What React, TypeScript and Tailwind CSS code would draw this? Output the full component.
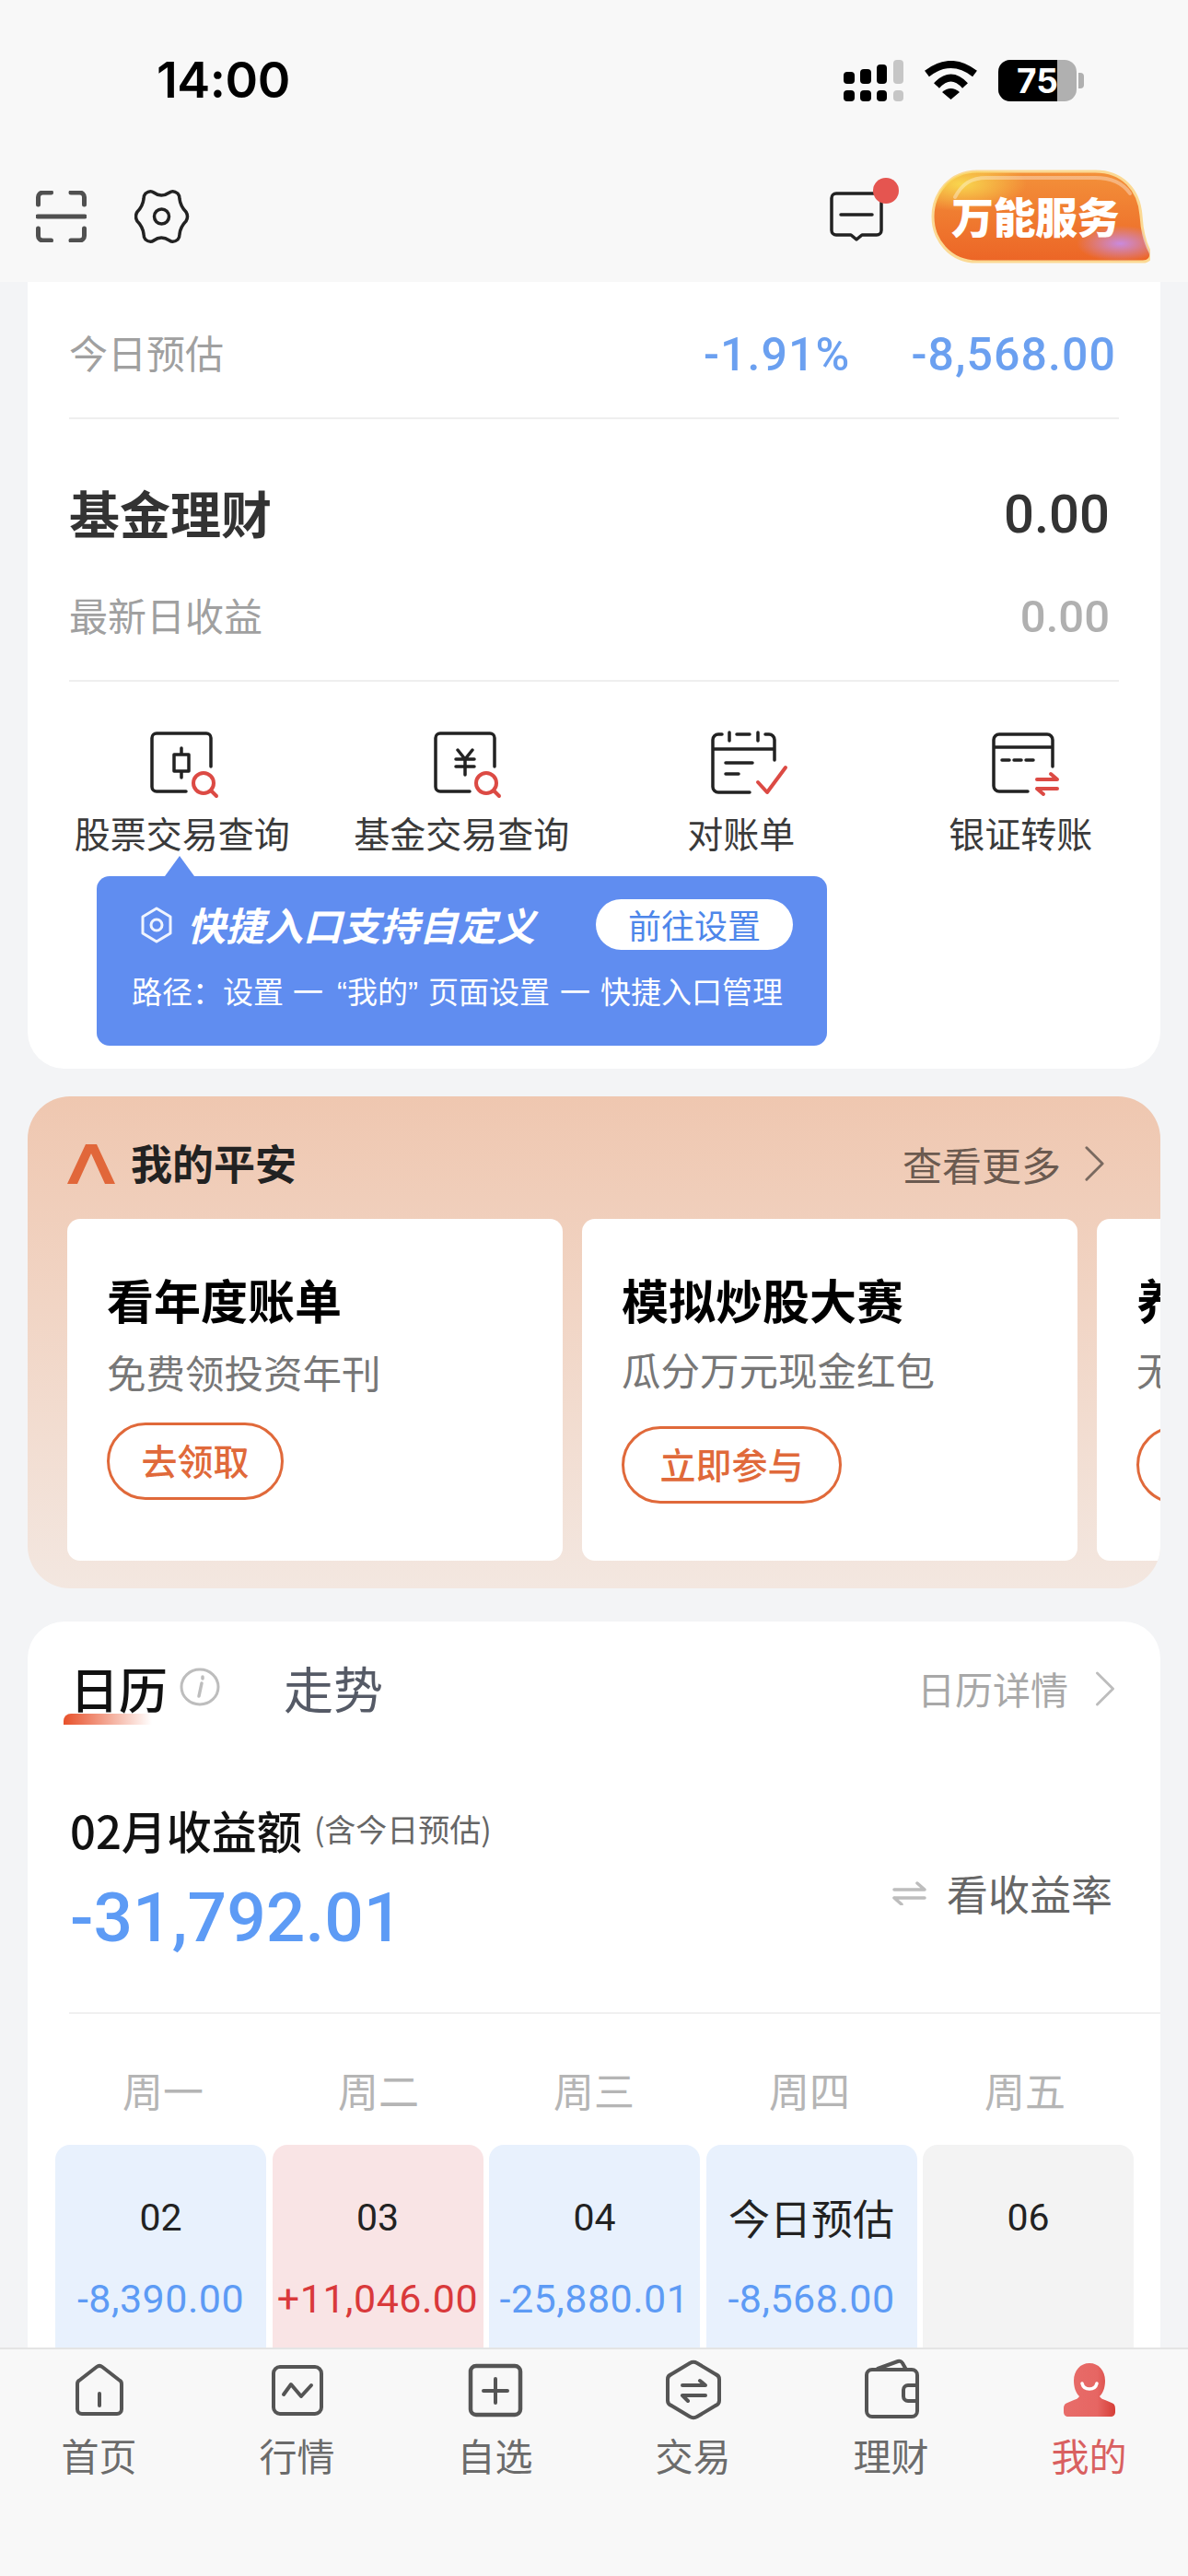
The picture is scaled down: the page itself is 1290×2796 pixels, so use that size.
import React from 'react';

const NUM = "font-['Roboto','Noto_Sans_CJK_SC',sans-serif]";

const SignalIcon = () => (
  <svg width="65" height="45" viewBox="0 0 65 45">
    <rect x="0" y="13" width="12" height="13" rx="4" fill="#000" />
    <rect x="18" y="10" width="12" height="16" rx="4" fill="#000" />
    <rect x="36" y="5" width="11" height="21" rx="4" fill="#000" />
    <rect x="54" y="0" width="11" height="26" rx="4" fill="#c6c6c6" />
    <rect x="0" y="33" width="12" height="12" rx="4" fill="#000" />
    <rect x="18" y="33" width="12" height="12" rx="4" fill="#000" />
    <rect x="36" y="33" width="11" height="12" rx="4" fill="#000" />
    <rect x="54" y="33" width="11" height="12" rx="4" fill="#c6c6c6" />
  </svg>
);

const WifiIcon = () => (
  <svg width="57" height="42" viewBox="0 0 57 42" fill="none">
    <path d="M2.5 14Q28.5 -6 54.5 14" stroke="#000" strokeWidth="8" />
    <path d="M13 27Q28.5 10 44 27" stroke="#000" strokeWidth="8" />
    <path d="M19 34Q28.5 26 38 34L28.5 42Z" fill="#000" />
  </svg>
);

const ScanIcon = () => (
  <svg width="55" height="56" viewBox="0 0 55 56" fill="none" stroke="#505050" strokeWidth="5" strokeLinecap="round">
    <path d="M2.5 15V7a5 5 0 0 1 5-5h9M38 2h9.5a5 5 0 0 1 5 5v8M2.5 41v8a5 5 0 0 0 5 5h9M38 54h9.5a5 5 0 0 0 5-5v-8" />
    <path d="M2 28h51" strokeWidth="5" />
  </svg>
);

const GearIcon = () => (
  <svg width="60" height="60" viewBox="0 0 60 60" fill="none" stroke="#222" strokeWidth="3.5" strokeLinejoin="round">
    <path d="M12 5Q17 1 21 4Q29 10 38 4Q42 1 47 5Q49 7 49 11Q50 19 56 25Q59 30 56 35Q50 41 49 49Q49 53 47 55Q42 59 38 56Q29 50 21 56Q17 59 12 55Q10 53 10 49Q9 41 3 35Q0 30 3 25Q9 19 10 11Q10 7 12 5Z" />
    <circle cx="29.5" cy="30" r="8" />
  </svg>
);

const MessageIcon = () => (
  <svg width="60" height="54" viewBox="0 0 60 54" fill="none" stroke="#222" strokeWidth="3.5" strokeLinejoin="round">
    <path d="M8 2h44a5 5 0 0 1 5 5v35a5 5 0 0 1-5 5H36l-6 5-6-5H8a5 5 0 0 1-5-5V7a5 5 0 0 1 5-5Z" />
    <path d="M13 25h34" strokeLinecap="round" />
  </svg>
);

const ServiceBadge = () => (
  <div className="relative w-[238px] h-[102px] ml-[51px]">
    <svg width="238" height="102" viewBox="0 0 238 102" className="block">
      <defs>
        <linearGradient id="b0" x1="0" y1="0" x2="0" y2="1">
          <stop offset="0" stopColor="#f3913a" />
          <stop offset="1" stopColor="#ec6526" />
        </linearGradient>
        <radialGradient id="b1" cx="0.13" cy="0.14" r="0.3">
          <stop offset="0" stopColor="#f8d64e" />
          <stop offset="1" stopColor="#f8d64e" stopOpacity="0" />
        </radialGradient>
        <radialGradient id="b2" cx="0.86" cy="0.8" r="0.2">
          <stop offset="0" stopColor="#c98add" />
          <stop offset="1" stopColor="#c98add" stopOpacity="0" />
        </radialGradient>
      </defs>
      <path d="M50 2H178C208 2 226 22 228 50C229 66 231 78 238 90C240 96 236 100 230 100H50C20 100 2 76 2 51S20 2 50 2Z" fill="url(#b0)" stroke="#fbd994" strokeWidth="3" />
      <path d="M50 2H178C208 2 226 22 228 50C229 66 231 78 238 90C240 96 236 100 230 100H50C20 100 2 76 2 51S20 2 50 2Z" fill="url(#b1)" />
      <path d="M50 2H178C208 2 226 22 228 50C229 66 231 78 238 90C240 96 236 100 230 100H50C20 100 2 76 2 51S20 2 50 2Z" fill="url(#b2)" />
      <path d="M26 30C34 15 44 9 60 9H178C196 9 208 14 216 26" fill="none" stroke="#fff" strokeOpacity="0.35" strokeWidth="4" strokeLinecap="round" />
    </svg>
    <div className="absolute inset-0 flex items-center pl-[22px] pb-[4px] text-white font-black text-[46px] leading-none tracking-[-0.5px]">万能服务</div>
  </div>
);

const TOOL_STROKE = { fill: 'none', stroke: '#222', strokeWidth: 3.5, strokeLinecap: 'round', strokeLinejoin: 'round' } as const;
const RED_STROKE = { fill: 'none', stroke: '#dc4a44', strokeWidth: 4, strokeLinecap: 'round', strokeLinejoin: 'round' } as const;

const StockIcon = () => (
  <svg width="80" height="80" viewBox="0 0 80 80" className="overflow-visible">
    <path {...TOOL_STROKE} d="M42 67H10a5 5 0 0 1-5-5V9a5 5 0 0 1 5-5h54a5 5 0 0 1 5 5v31" />
    <path {...TOOL_STROKE} d="M37 20v7M37 45v7M29 27h16v18H29z" />
    <circle {...RED_STROKE} cx="61" cy="58" r="11" />
    <path {...RED_STROKE} d="M69 66l6 6" />
  </svg>
);

const FundIcon = () => (
  <svg width="80" height="80" viewBox="0 0 80 80" className="overflow-visible">
    <path {...TOOL_STROKE} d="M46 67H14a5 5 0 0 1-5-5V9a5 5 0 0 1 5-5h54a5 5 0 0 1 5 5v31" />
    <path {...TOOL_STROKE} d="M33 22l8 10 8-10M31 32h20M31 40h20M41 32v17" />
    <circle {...RED_STROKE} cx="64" cy="58" r="11" />
    <path {...RED_STROKE} d="M72 66l6 6" />
  </svg>
);

const StatementIcon = () => (
  <svg width="80" height="80" viewBox="0 0 80 80" className="overflow-visible">
    <path {...TOOL_STROKE} d="M47 68H13a6 6 0 0 1-6-6V11a6 6 0 0 1 6-6h4M33 5h14M64 5h4a6 6 0 0 1 6 6v22M7 21h67M25 3v9M56 3v9" />
    <path {...TOOL_STROKE} d="M21 36h29M21 48h14" />
    <path {...RED_STROKE} d="M56 57l10 11 20-27" />
  </svg>
);

const TransferIcon = () => (
  <svg width="80" height="80" viewBox="0 0 80 80" className="overflow-visible">
    <path {...TOOL_STROKE} d="M45 67H14a6 6 0 0 1-6-6V11a6 6 0 0 1 6-6h52a6 6 0 0 1 6 6v29M8 19h64" />
    <path {...TOOL_STROKE} d="M17 33h8M30 33h8M43 33h8" />
    <path {...RED_STROKE} d="M55 54h22l-7-6M55 64h22M55 64l7 6" />
  </svg>
);

const Chevron = ({ className, color }: { className: string; color: string }) => (
  <svg viewBox="0 0 24 40" className={className} fill="none" stroke={color} strokeWidth="3" strokeLinecap="round" strokeLinejoin="round">
    <path d="M3 2l18 18L3 38" />
  </svg>
);

const tools = [
  { label: '股票交易查询', icon: <StockIcon /> },
  { label: '基金交易查询', icon: <FundIcon /> },
  { label: '对账单', icon: <StatementIcon /> },
  { label: '银证转账', icon: <TransferIcon /> },
];

const promos = [
  { title: '看年度账单', sub: '免费领投资年刊', cta: '去领取', subGap: 'mt-[14px]', btnGap: 'mt-[25px]', btn: 'w-[192px]' },
  { title: '模拟炒股大赛', sub: '瓜分万元现金红包', cta: '立即参与', subGap: 'mt-[11px]', btnGap: 'mt-[32px]', btn: 'w-[239px]' },
  { title: '养老规划', sub: '无门槛领取', cta: '立即查看', subGap: 'mt-[11px]', btnGap: 'mt-[32px]', btn: 'w-[239px]' },
];

const weekdays = ['周一', '周二', '周三', '周四', '周五'];

const days = [
  { date: '02', value: '-8,390.00', bg: 'bg-[#e8f1fd]', color: 'text-[#5d9bf5]', cjk: false },
  { date: '03', value: '+11,046.00', bg: 'bg-[#f9e4e5]', color: 'text-[#d9393b]', cjk: false },
  { date: '04', value: '-25,880.01', bg: 'bg-[#e8f1fd]', color: 'text-[#5d9bf5]', cjk: false },
  { date: '今日预估', value: '-8,568.00', bg: 'bg-[#e8f1fd]', color: 'text-[#5d9bf5]', cjk: true },
  { date: '06', value: '', bg: 'bg-[#f3f3f3]', color: '', cjk: false },
];

const NAV_STROKE = { fill: 'none', stroke: '#555', strokeWidth: 4, strokeLinecap: 'round', strokeLinejoin: 'round' } as const;

const navItems = [
  {
    label: '首页',
    icon: (
      <svg width="72" height="72" viewBox="0 0 72 72">
        <path {...NAV_STROKE} d="M33 11a5 5 0 0 1 6 0l18 14a5 5 0 0 1 3 5v27a5 5 0 0 1-5 5H17a5 5 0 0 1-5-5V30a5 5 0 0 1 3-5Z" />
        <path {...NAV_STROKE} d="M36 40v13" />
      </svg>
    ),
  },
  {
    label: '行情',
    icon: (
      <svg width="72" height="72" viewBox="0 0 72 72">
        <rect {...NAV_STROKE} x="10" y="11" width="52" height="51" rx="7" />
        <path {...NAV_STROKE} d="M21 41l8-11 11 13 11-12" />
      </svg>
    ),
  },
  {
    label: '自选',
    icon: (
      <svg width="72" height="72" viewBox="0 0 72 72">
        <rect {...NAV_STROKE} strokeWidth="4.5" x="9" y="10" width="54" height="53" rx="6" />
        <path {...NAV_STROKE} d="M36 24v26M23 37h26" />
      </svg>
    ),
  },
  {
    label: '交易',
    icon: (
      <svg width="72" height="72" viewBox="0 0 72 72">
        <path {...NAV_STROKE} d="M32 7a8 8 0 0 1 8 0l20 12a6 6 0 0 1 4 6v22a6 6 0 0 1-4 6L40 65a8 8 0 0 1-8 0L12 53a6 6 0 0 1-4-6V25a6 6 0 0 1 4-6Z" />
        <path {...NAV_STROKE} d="M24 31h25l-6-5M24 42h25M24 42l6 6" />
      </svg>
    ),
  },
  {
    label: '理财',
    icon: (
      <svg width="72" height="72" viewBox="0 0 72 72">
        <path {...NAV_STROKE} d="M15 14h43a6 6 0 0 1 6 6v39a6 6 0 0 1-6 6H15a6 6 0 0 1-6-6V20a6 6 0 0 1 6-6ZM21 13l22-8a4 4 0 0 1 5 2l4 7M64 31H54a5 5 0 0 0-5 5v7a5 5 0 0 0 5 5h10" />
      </svg>
    ),
  },
  {
    label: '我的',
    active: true,
    icon: (
      <svg width="72" height="72" viewBox="0 0 72 72">
        <defs>
          <linearGradient id="me" x1="0" y1="0" x2="1" y2="0">
            <stop offset="0" stopColor="#e86d6a" />
            <stop offset="0.65" stopColor="#e66663" />
            <stop offset="1" stopColor="#d63f38" />
          </linearGradient>
        </defs>
        <path fill="url(#me)" d="M36 7c10 0 17 8 17 19 0 7-2 13-6 17 1 2 3 3 6 4l7 3c3 1 4 3 4 7v3c0 3-2 5-5 5H13c-3 0-5-2-5-5v-3c0-4 1-6 4-7l7-3c3-1 5-2 6-4-4-4-6-10-6-17 0-11 7-19 17-19Z" />
        <path d="M28 29c1 4 4 6 8 6s7-2 8-6" fill="none" stroke="#fff" strokeWidth="3.5" strokeLinecap="round" />
      </svg>
    ),
  },
];

export default function App() {
  return (
    <div className="h-[2796px] w-[1290px] flex flex-col overflow-hidden bg-[#f3f4f6] font-['Noto_Sans_CJK_SC',sans-serif]">
      {/* 顶部状态栏 + 工具栏 */}
      <header className="h-[306px] shrink-0 bg-[#f8f8f8]">
        <div className="h-[174px] flex items-center justify-between pl-[170px] pr-[113px]">
          <span className="font-['Inter',sans-serif] font-semibold text-[54px] leading-none text-black tracking-[-0.5px]">14:00</span>
          <div className="flex items-center gap-[23px]">
            <SignalIcon />
            <WifiIcon />
            <div className="flex items-center gap-[2px]">
              <div className="relative w-[85px] h-[45px] rounded-[13px] overflow-hidden bg-[#b0b0b0]">
                <div className="h-full w-[64px] bg-black" />
                <div className="absolute inset-0 flex items-center justify-center font-['Inter',sans-serif] font-bold text-[37px] leading-none text-white">75</div>
              </div>
              <div className="w-[6px] h-[17px] rounded-r-[4px] bg-[#b0b0b0]" />
            </div>
          </div>
        </div>
        <div className="h-[122px] flex items-center pl-[39px] pr-[41px]">
          <ScanIcon />
          <div className="ml-[52px]"><GearIcon /></div>
          <div className="ml-auto relative">
            <MessageIcon />
            <div className="absolute top-[-15px] left-[48px] w-[28px] h-[28px] rounded-full bg-[#e55550]" />
          </div>
          <ServiceBadge />
        </div>
      </header>

      <main className="flex-1 min-h-0 overflow-hidden">
        {/* 账户卡片 */}
        <section className="mx-[30px] bg-white rounded-b-[40px] h-[854px]">
          <div className="mx-[45px] h-[149px] pt-[10px] border-b-2 border-[#efefef] flex items-center justify-between">
            <span className="pb-[6px] text-[42px] leading-none text-[#a0a0a0]">今日预估</span>
            <div className={`flex items-center gap-[66px] pr-[3px] text-[50px] leading-none font-medium tracking-[1.1px] text-[#6ba0f0] ${NUM}`}>
              <span>-1.91%</span>
              <span>-8,568.00</span>
            </div>
          </div>
          <div className="mx-[45px] h-[285px] pt-[62px] border-b-2 border-[#efefef]">
            <div className="h-[80px] flex items-center justify-between pr-[10px]">
              <span className="pb-[4px] text-[55px] leading-none font-bold text-[#333]">基金理财</span>
              <span className={`pt-[2px] text-[58px] leading-none font-medium text-[#333] ${NUM}`}>0.00</span>
            </div>
            <div className="mt-[32px] h-[80px] flex items-center justify-between pr-[10px]">
              <span className="pb-[4px] text-[42px] leading-none text-[#a0a0a0]">最新日收益</span>
              <span className={`text-[49px] leading-none font-medium text-[#b0b0b0] ${NUM}`}>0.00</span>
            </div>
          </div>
          <div className="grid grid-cols-4 pl-[16px] pt-[52px]">
            {tools.map(t => (
              <div key={t.label} className="flex flex-col items-center">
                <div className="ml-[5px]">{t.icon}</div>
                <span className="mt-[6px] text-[39px] leading-[50px] text-[#3a3a3a] whitespace-nowrap">{t.label}</span>
              </div>
            ))}
          </div>
          <div className="relative ml-[75px] mt-[23px] w-[793px] h-[184px] rounded-[14px] bg-[#608df0] text-white">
            <div className="absolute left-[74px] top-[-22px] w-0 h-0 border-x-[16px] border-x-transparent border-b-[22px] border-b-[#608df0]" />
            <div className="flex items-center h-[55px] pl-[47px] pr-[37px] translate-y-[25px]">
              <svg width="36" height="40" viewBox="0 0 36 40" fill="none" stroke="#fff" strokeWidth="3" strokeOpacity="0.9">
                <path d="M18 2l15 9v18l-15 9-15-9V11z" strokeLinejoin="round" />
                <circle cx="18" cy="20" r="6" />
              </svg>
              <span className="ml-[15px] pb-[1px] text-[42px] leading-none font-bold italic whitespace-nowrap">快捷入口支持自定义</span>
              <span className="ml-auto w-[214px] h-[55px] pb-[2px] rounded-full bg-white flex items-center justify-center text-[36px] leading-none text-[#4d86ea]">前往设置</span>
            </div>
            <div className="pl-[38px] mt-[47px] text-[33px] leading-[44px] whitespace-nowrap">
              路径：设置<span className="mx-[10px]">一</span><span className="ml-[5px] font-['Liberation_Sans',sans-serif]">“</span>我的<span className="mr-[11px] font-['Liberation_Sans',sans-serif]">”</span>页面设置<span className="mx-[11px]">一</span>快捷入口管理
            </div>
          </div>
        </section>

        {/* 我的平安 */}
        <section className="mx-[30px] mt-[30px] rounded-[46px] overflow-hidden bg-gradient-to-b from-[#efc7b0] to-[#f3e7e0] pb-[30px]">
          <div className="h-[133px] pt-[13px] pl-[43px] pr-[60px] flex items-center">
            <svg width="52" height="43" viewBox="0 0 52 43" fill="#e1673a">
              <path d="M20 0h12l20 43H41L26 10 11 43H0z" />
            </svg>
            <span className="ml-[17px] pb-[4px] text-[45px] leading-none font-bold text-[#222]">我的平安</span>
            <span className="ml-auto text-[43px] leading-none text-[#6b5a50]">查看更多</span>
            <Chevron className="ml-[25px] w-[23px] h-[40px]" color="#7a6a60" />
          </div>
          <div className="flex gap-[21px] pl-[43px]">
            {promos.map(p => (
              <div key={p.title} className="w-[538px] h-[371px] shrink-0 rounded-[14px] bg-white pl-[43px] pt-[52px]">
                <div className="text-[51px] leading-[70px] font-bold text-black whitespace-nowrap">{p.title}</div>
                <div className={`${p.subGap} text-[42.5px] leading-[60px] text-[#777] whitespace-nowrap`}>{p.sub}</div>
                <div className={`${p.btnGap} ${p.btn} h-[84px] pb-[4px] rounded-full border-[3px] border-[#e0693a] flex items-center justify-center text-[39px] leading-none font-medium text-[#e0693a]`}>{p.cta}</div>
              </div>
            ))}
          </div>
        </section>

        {/* 日历 */}
        <section className="mx-[30px] mt-[36px] rounded-t-[40px] bg-white pt-[40px]">
          <div className="h-[70px] pl-[46px] pr-[48px] flex items-center">
            <div className="relative pb-[7px]">
              <span className="text-[53px] leading-[70px] font-medium text-[#111]">日历</span>
              <div className="absolute left-[-7px] top-[63px] w-[96px] h-[12px] rounded-tl-[8px] bg-gradient-to-r from-[#e8512b] to-transparent" />
            </div>
            <svg width="45" height="42" viewBox="0 0 45 42" className="ml-[13px] mb-[8px]" fill="none">
              <ellipse cx="22" cy="21" rx="20" ry="19" stroke="#bdbdbd" strokeWidth="3" />
              <path d="M24 17l-3 14M25 10v2" stroke="#bdbdbd" strokeWidth="3.5" strokeLinecap="round" />
            </svg>
            <span className="ml-[68px] pb-[7px] text-[54px] leading-[70px] text-[#555a66]">走势</span>
            <span className="ml-auto text-[41px] leading-none text-[#a8a8a8] -translate-y-[3px]">日历详情</span>
            <Chevron className="ml-[28px] w-[24px] h-[38px] -translate-y-[2px]" color="#bdbdbd" />
          </div>
          <div className="mt-[87px] pl-[46px] pr-[52px] flex justify-between">
            <div>
              <div className="h-[60px] flex items-center">
                <span className="pb-[4px] text-[49px] leading-none font-medium text-[#111]">02月收益额</span>
                <span className="ml-[13px] pb-[4px] text-[34px] leading-none text-[#666]">(含今日预估)</span>
              </div>
              <div className={`mt-[19px] text-[75px] leading-[90px] font-medium text-[#5d9bf5] ${NUM}`}>-31,792.01</div>
            </div>
            <div className="pt-[26px] flex items-center">
              <svg width="37" height="26" viewBox="0 0 37 26" fill="none" stroke="#bdbdbd" strokeWidth="3.5" strokeLinecap="round" strokeLinejoin="round">
                <path d="M2 9h33l-8-7M2 18h33M2 18l8 7" />
              </svg>
              <span className="ml-[22px] text-[45px] leading-none text-[#666]">看收益率</span>
            </div>
          </div>
          <div className="ml-[45px] mt-[58px] h-[2px] bg-[#f0f0f0]" />
          <div className="grid grid-cols-5 pl-[30px] pr-[30px] mt-[52px]">
            {weekdays.map(d => (
              <div key={d} className="text-center text-[44px] leading-[60px] text-[#b5b5b5]">{d}</div>
            ))}
          </div>
          <div className="grid grid-cols-5 gap-[6.5px] pl-[30px] pr-[29px] mt-[30px]">
            {days.map(d => (
              <div key={d.date} className={`h-[260px] rounded-t-[16px] pt-[49px] text-center ${d.bg}`}>
                <div className={`h-[60px] leading-[60px] text-[#222] ${d.cjk ? 'text-[45px]' : `text-[41px] ${NUM}`}`}>{d.date}</div>
                <div className={`mt-[28px] h-[60px] leading-[60px] text-[43px] tracking-[0.5px] whitespace-nowrap ${NUM} ${d.color}`}>{d.value}</div>
              </div>
            ))}
          </div>
        </section>
      </main>

      {/* 底部导航 */}
      <nav className="h-[248px] shrink-0 bg-[#f8f8f8] border-t-2 border-[#e4e4e4] grid grid-cols-6 pt-[8px] items-start">
        {navItems.map(item => (
          <div key={item.label} className="flex flex-col items-center">
            {item.icon}
            <span className={`mt-[10px] text-[41px] leading-[48px] ${item.active ? 'text-[#d96060]' : 'text-[#6b6b6b]'}`}>{item.label}</span>
          </div>
        ))}
      </nav>
    </div>
  );
}
